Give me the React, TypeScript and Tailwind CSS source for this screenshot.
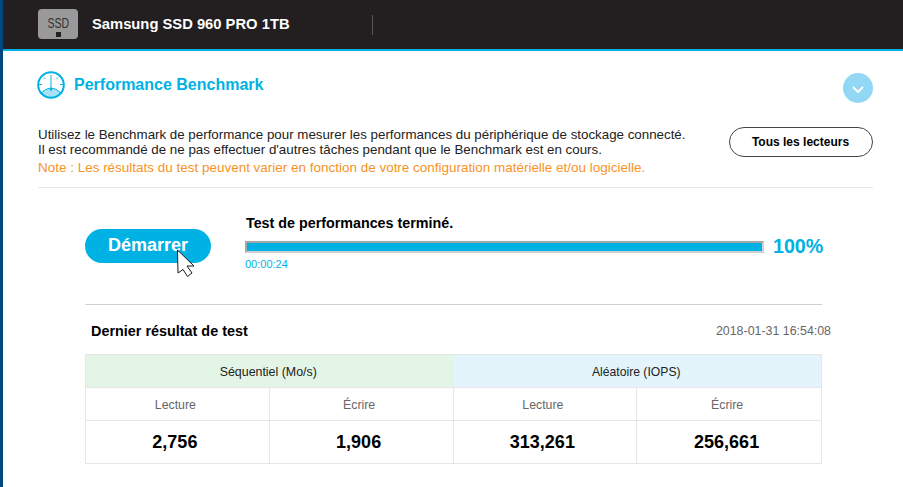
import React from "react";

const cells = [
  { label: "Lecture", value: "2,756" },
  { label: "Écrire", value: "1,906" },
  { label: "Lecture", value: "313,261" },
  { label: "Écrire", value: "256,661" },
];

function GaugeIcon() {
  return (
    <svg width="28" height="28" viewBox="0 0 28 28" fill="none">
      <path d="M3.5 22.5 Q14 11.5 24.5 22.5 Q14 30 3.5 22.5 Z" fill="#a8e0f4" />
      <circle cx="14" cy="14" r="12.8" stroke="#00b2e3" strokeWidth="2" />
      <path d="M3.5 22.5 Q14 11.5 24.5 22.5" stroke="#00b2e3" strokeWidth="1" />
      <path d="M14 4 V19 M2 13.5 H5 M23 13.5 H26 M7 6.5 L8.5 8 M21 6.5 L19.5 8" stroke="#00b2e3" strokeWidth="1" />
      <circle cx="14" cy="18.5" r="1.2" fill="#00b2e3" />
    </svg>
  );
}

function Cursor() {
  return (
    <svg className="absolute left-[176px] top-[249px]" width="20" height="29" viewBox="0 0 20 29">
      <path
        d="M1.5 1 L2 24 L7 20.5 L11.5 27.5 L16 24 L11 17 L18 17 Z"
        fill="#fff"
        stroke="#1a1a1a"
        strokeWidth="1"
      />
    </svg>
  );
}

export default function App() {
  return (
    <div className="relative flex w-[903px] h-[487px] overflow-hidden bg-white font-['Liberation_Sans',Arial,sans-serif]">
      <div className="w-[3px] shrink-0 bg-[#004680]" />
      <div className="flex-1 flex flex-col">
        {/* top bar */}
        <div className="h-[51px] shrink-0 flex items-center bg-[#231f20] border-b-2 border-[#00b2e3] pl-[35px]">
          <div className="w-10 h-[30px] mt-[-1px] rounded-sm bg-[#999999] flex flex-col items-center">
            <span className="text-sm leading-[15px] mt-[7px] text-[#333] scale-x-[0.75]">SSD</span>
            <span className="w-[5px] h-[5px] mt-px bg-[#222]" />
          </div>
          <span className="ml-[14px] text-[14.75px] font-bold text-white">Samsung SSD 960 PRO 1TB</span>
          <div className="ml-[82px] w-px h-5 bg-[#555]" />
        </div>

        <div className="flex-1 pl-[35px] pr-[30px]">
          {/* title */}
          <div className="flex items-center justify-between h-[76px]">
            <div className="flex items-center gap-[9px] -mt-[8px] -ml-px">
              <GaugeIcon />
              <span className="text-base font-bold text-[#00b2e3]">Performance Benchmark</span>
            </div>
            <div className="w-[30px] h-[30px] -mt-[2px] pt-[3px] rounded-full bg-[#92d7f3] flex items-center justify-center">
              <svg width="12" height="7" viewBox="0 0 12 7" fill="none">
                <path d="M1 1 L6 6 L11 1" stroke="#fff" strokeWidth="2" />
              </svg>
            </div>
          </div>

          {/* description */}
          <div className="flex justify-between h-[61px] border-b border-[#e6e6e6]">
            <div className="text-[13.33px] leading-[15px] whitespace-nowrap">
              <p className="text-[#222]">Utilisez le Benchmark de performance pour mesurer les performances du périphérique de stockage connecté.</p>
              <p className="text-[#222]">Il est recommandé de ne pas effectuer d'autres tâches pendant que le Benchmark est en cours.</p>
              <p className="mt-[3px] text-[13.47px] text-[#f7931e]">Note : Les résultats du test peuvent varier en fonction de votre configuration matérielle et/ou logicielle.</p>
            </div>
            <button className="w-[144px] h-[30px] pr-px rounded-full border border-[#444] bg-white text-xs font-bold text-black">
              Tous les lecteurs
            </button>
          </div>

          {/* progress */}
          <div className="ml-[47px] w-[737px] h-[117px] flex border-b border-[#d0d0d0]">
            <button className="w-[126px] h-[34px] shrink-0 mt-[41px] pb-[2px] rounded-full bg-[#00b2e3] text-lg font-bold text-white">
              Démarrer
            </button>
            <div className="ml-[35px] mt-[27px]">
              <p className="text-[14.3px] leading-[16px] font-bold text-black">Test de performances terminé.</p>
              <div className="flex items-center h-[24px] mt-[3px] -ml-px">
                <div className="w-[519px] h-[12px] mt-[2px] border-2 border-[#a6a6a6] border-r-[#d0d0d0] border-b-[#d0d0d0] bg-[#00b2e3]" />
                <span className="ml-[9px] text-[19.6px] leading-[22px] font-bold text-[#00b2e3]">100%</span>
              </div>
              <p className="text-[11px] leading-[12px] -ml-px text-[#00b2e3]">00:00:24</p>
            </div>
          </div>

          {/* results */}
          <div className="ml-[47px] w-[737px]">
            <div className="flex items-center justify-between h-[49px] pl-[6px] pt-[4px]">
              <span className="text-[14.4px] font-bold text-black">Dernier résultat de test</span>
              <span className="text-[12.4px] text-[#666] mr-[-9px]">2018-01-31 16:54:08</span>
            </div>
            <div className="grid grid-cols-4 border border-[#e6e6e6]">
              <div className="col-span-2 h-[33px] pt-[2px] pr-[3px] flex items-center justify-center bg-[#e2f5e6] border-b border-[#e6e6e6] text-[12.4px] text-[#222]">
                Séquentiel (Mo/s)
              </div>
              <div className="col-span-2 h-[33px] pt-[2px] pr-[2px] flex items-center justify-center bg-[#e3f4fb] border-b border-[#e6e6e6] text-[12.2px] text-[#222]">
                Aléatoire (IOPS)
              </div>
              {cells.map((cell, index) => (
                <div
                  key={index}
                  className={
                    index < 3
                      ? "h-[33px] pt-[2px] pr-[4px] flex items-center justify-center border-b border-r border-[#e6e6e6] text-[12.3px] text-[#666]"
                      : "h-[33px] pt-[2px] pr-[4px] flex items-center justify-center border-b border-[#e6e6e6] text-[12.3px] text-[#666]"
                  }
                >
                  {cell.label}
                </div>
              ))}
              {cells.map((cell, index) => (
                <div
                  key={index}
                  className={
                    index < 3
                      ? "h-[42px] pr-[5px] flex items-center justify-center border-r border-[#e6e6e6] text-lg font-bold text-black"
                      : "h-[42px] pr-[5px] flex items-center justify-center text-lg font-bold text-black"
                  }
                >
                  {cell.value}
                </div>
              ))}
            </div>
          </div>
        </div>
      </div>
      <Cursor />
    </div>
  );
}
